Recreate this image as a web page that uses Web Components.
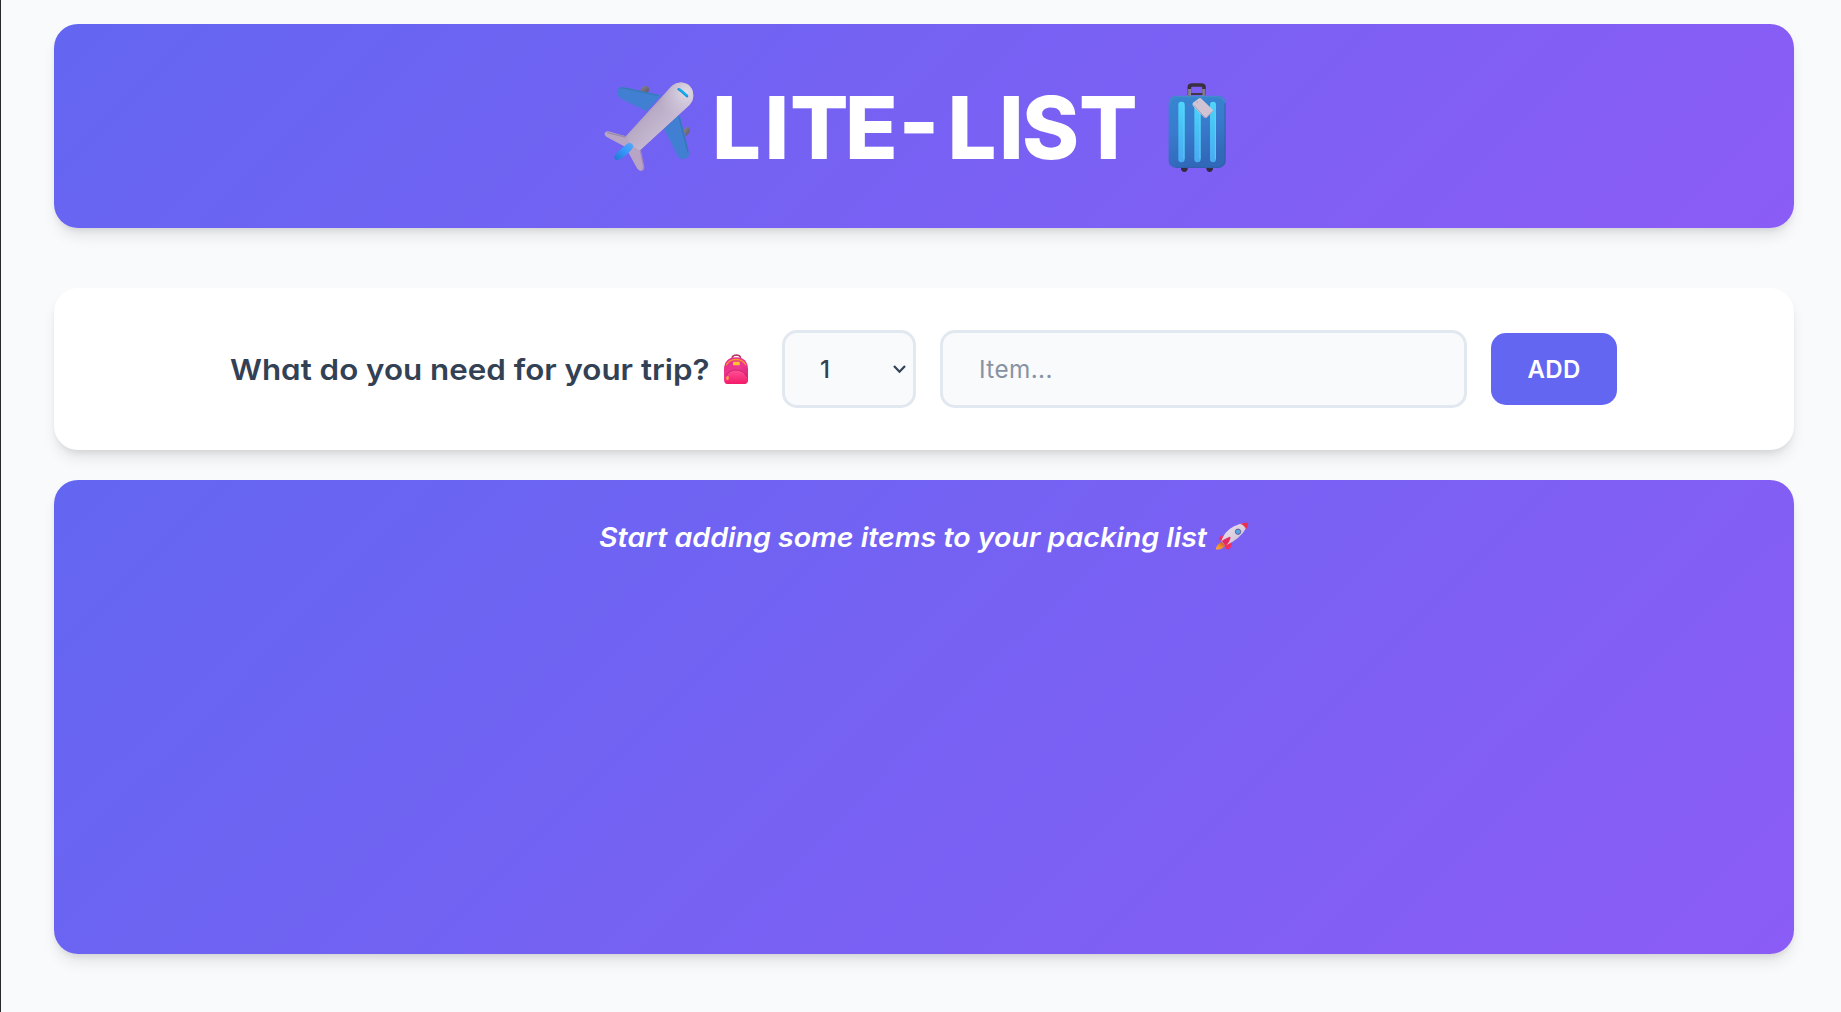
<!DOCTYPE html>
<html lang="en">
<head>
<meta charset="utf-8">
<title>Lite-List</title>
<style>
html,body{margin:0;height:100%;background:#f8fafc;overflow:hidden}
body{font-family:Inter,"Open Sans",sans-serif;color:#334155;font-feature-settings:"cv11";--card-shadow:0 10px 15px -3px rgba(0,0,0,.1),0 4px 6px -2px rgba(0,0,0,.08)}
</style>
</head>
<body>
<packing-app></packing-app>
<script>
const define=(name,html,setup)=>customElements.define(name,class extends HTMLElement{
  constructor(){super();this.attachShadow({mode:'open'}).innerHTML=html;}
  connectedCallback(){if(setup)setup(this);}
});

define('emoji-plane',`<style>:host{display:block;width:90px;height:90px}svg{display:block}</style>
<svg width="90" height="90" viewBox="42 36 270 270" aria-hidden="true">
<defs>
<linearGradient id="b" x1="135" y1="130" x2="205" y2="195" gradientUnits="userSpaceOnUse"><stop stop-color="#958a9f"/><stop offset=".35" stop-color="#b9abc5"/><stop offset="1" stop-color="#c6b9d2"/></linearGradient>
<radialGradient id="n" gradientUnits="userSpaceOnUse" cx="288" cy="66" r="85"><stop stop-color="#e0dce5"/><stop offset="1" stop-color="#cfc3da" stop-opacity="0"/></radialGradient>
<linearGradient id="t" x1="0" y1="1" x2="1" y2="0"><stop stop-color="#2475d0"/><stop offset=".6" stop-color="#3a9bff"/><stop offset="1" stop-color="#55a9f4"/></linearGradient>
<linearGradient id="g" x1="0" y1="0" x2="1" y2="1"><stop stop-color="#8b8794"/><stop offset="1" stop-color="#5c5763"/></linearGradient>
</defs>
<path d="M149 62 159 50Q166 44 174 50Q181 56 173 69Z" fill="url(#g)"/>
<path d="M279 181 288 173Q296 168 300 176Q303 184 288 199Z" fill="url(#g)"/>
<path d="M98 51 214 76 170 124 94 86Q80 79 82 65Q84 51 98 51Z" fill="#417fd3"/>
<path d="M90 57Q94 53 101 54L205 77" fill="none" stroke="#367bb6" stroke-width="4"/>
<path d="M269 133 297 247Q299 264 283 267Q269 268 263 257L222 176Z" fill="#417fd3"/>
<path d="M267 140 294 247" fill="none" stroke="#3676b7" stroke-width="4"/>
<path d="M246 47Q269 31 293 43Q313 57 309 85Q308 95 299 104L150 241 162 290Q163 302 153 303Q146 303 141 295L116 249 102 229 49 200Q40 193 46 187Q50 182 60 185L108 199Z" fill="#b8a5c6"/>
<path d="M246 47Q269 31 293 43Q313 57 309 85Q308 95 299 104L150 241Q122 230 108 199Z" fill="url(#b)"/>
<path d="M246 47Q269 31 293 43Q313 57 309 85Q308 95 299 104L150 241 108 199Z" fill="url(#n)"/>
<path d="M151 241 161 291Q161 299 154 301" fill="none" stroke="#a98ab8" stroke-width="4"/>
<path d="M52 188 107 201" fill="none" stroke="#9b8ba6" stroke-width="4"/>
<path d="M110 223Q118 216 125 221Q133 226 128 234Q122 245 98 263Q87 271 78 270Q70 266 74 258Q79 246 96 234Z" fill="url(#t)"/>
<path d="M266 58Q271 60 275 64L291 78" stroke="#198fdb" stroke-width="8" stroke-linecap="round" fill="none"/>
<path d="M268 57 291 76" stroke="#0bbcf2" stroke-width="4" stroke-linecap="round"/>
</svg>`);

define('emoji-luggage',`<style>:host{display:block;width:90px;height:90px}svg{display:block}</style>
<svg width="90" height="90" viewBox="36 36 270 270" aria-hidden="true">
<defs>
<linearGradient id="b" x1="0" y1="0" x2=".25" y2="1"><stop stop-color="#3687d2"/><stop offset=".5" stop-color="#397bcd"/><stop offset="1" stop-color="#3168b9"/></linearGradient>
<linearGradient id="s" x1="0" y1="0" x2="0" y2="1"><stop stop-color="#50d4fb"/><stop offset=".45" stop-color="#48c1f5"/><stop offset="1" stop-color="#4aaaf2"/></linearGradient>
<linearGradient id="m" x1="0" y1="0" x2="1" y2="0"><stop stop-color="#766e7e"/><stop offset=".5" stop-color="#c5bdca"/><stop offset="1" stop-color="#736b79"/></linearGradient>
</defs>
<path d="M123 289H143V296Q142 305 133 306Q124 305 123 296ZM199 289H219V296Q218 305 209 306Q200 305 199 296Z" fill="#342b3d"/>
<path d="M148 74V52Q148 45 156 45H184Q192 45 192 52V74" fill="none" stroke="#3b3040" stroke-width="11"/>
<path d="M143 57H153V78H143ZM187 57H197V78H187Z" fill="url(#m)"/>
<path d="M153 72H187" stroke="#423745" stroke-width="6"/>
<rect x="86" y="77" width="171" height="217" rx="22" fill="url(#b)"/>
<path d="M255 99V271Q253 292 231 292H110" fill="none" stroke="#315ea8" stroke-width="4" opacity=".6"/>
<path d="M89 104Q89 80 112 80H230Q251 81 254 98" fill="none" stroke="#468bca" stroke-width="4"/>
<g fill="url(#s)"><rect x="115" y="95" width="19" height="182" rx="9"/><rect x="163" y="95" width="19" height="182" rx="9"/><rect x="210" y="95" width="18" height="182" rx="9"/></g>
<g fill="none" stroke="#62dcfa" stroke-width="2"><path d="M132 105V267M180 120V267M226 128V267"/></g>
<path d="M177 85 182 84 217 118Q221 121 217 125L200 143Q196 146 192 142L159 108Q157 105 158 99Z" fill="#cfc3d4"/>
<path d="M159 104 195 142Q197 144 201 141L217 124" fill="none" stroke="#aaa0bd" stroke-width="3"/>
<circle cx="172" cy="97" r="3" fill="#beaec3"/>
</svg>`);

define('emoji-backpack',`<style>:host{display:block;width:28px;height:32px}svg{display:block}</style>
<svg width="28" height="32" viewBox="66 99 84 96" aria-hidden="true">
<defs><linearGradient id="b" x1="0" y1="0" x2="1" y2="1"><stop stop-color="#e82c83"/><stop offset=".5" stop-color="#ed3990"/><stop offset="1" stop-color="#d51f68"/></linearGradient>
<linearGradient id="p" x1=".5" y1="0" x2=".5" y2="1"><stop stop-color="#ff5097"/><stop offset="1" stop-color="#f31b69"/></linearGradient></defs>
<path d="M97 116V111Q99 106 109 105Q119 106 121 111V116" fill="none" stroke="#bb3a66" stroke-width="5"/>
<path d="M72 148Q73 113 108 112Q143 113 144 147V180Q144 192 132 192H84Q72 192 72 180Z" fill="url(#b)"/>
<path d="M79 136Q86 119 108 118Q130 119 138 136" fill="none" stroke="#f3a02d" stroke-width="3.5"/>
<path d="M76 190Q80 151 108 150Q138 151 143 181Q142 192 131 192H83Z" fill="url(#p)"/>
<path d="M78 169Q84 151 108 150Q132 151 139 170" fill="none" stroke="#c52268" stroke-width="2.5"/>
<rect x="99" y="125" width="20" height="11" rx="2" fill="#ffc334"/>
<path d="M81 169H86V178Q82 183 79 178V171Z" fill="#ffac38"/>
</svg>`);

define('emoji-rocket',`<style>:host{display:block;width:34px;height:29px}svg{display:block}</style>
<svg width="34" height="29" viewBox="885 39 102 87" aria-hidden="true">
<defs><linearGradient id="f" x1="1" y1="0" x2="0" y2="1"><stop stop-color="#b54b2b"/><stop offset=".5" stop-color="#f38b27"/><stop offset="1" stop-color="#ffae37"/></linearGradient>
<linearGradient id="b" x1="0" y1="0" x2="1" y2="1"><stop stop-color="#eee5f1"/><stop offset="1" stop-color="#c8b9d0"/></linearGradient></defs>
<path d="M903 100Q892 104 887 121Q903 124 915 112L912 101Z" fill="url(#f)"/>
<path d="M914 80Q899 78 896 92L905 95 918 91ZM936 94Q937 111 928 121L918 121 915 108Z" fill="#f02e61"/>
<path d="M904 97Q913 67 942 52Q962 42 977 43Q983 48 978 58Q962 89 916 110Z" fill="url(#b)"/>
<path d="M961 45Q975 39 984 42Q987 48 978 61Q974 49 961 45Z" fill="#ef2e4d"/>
<path d="M905 96Q914 89 929 83L932 86Q928 101 917 112Z" fill="#e52a61"/>
<circle cx="954" cy="68" r="8" fill="#52a8e8" stroke="#665e94" stroke-width="3"/>
</svg>`);

define('page-header',`<style>
:host{display:flex;height:204px;border-radius:24px;background:linear-gradient(135deg,#6366f1,#8b5cf6);box-shadow:var(--card-shadow);align-items:center;justify-content:center;padding:2px 2px 0 0;box-sizing:border-box;color:#fff}
svg{display:block;overflow:visible;margin:0 17px 0 23px}
text{font:800 86.6px Inter,sans-serif;font-feature-settings:"case"}
</style><emoji-plane></emoji-plane>
<svg width="418" height="90"><text fill="currentColor" y="77" x="-5 47.5 73 128 181.5 230.5 282 305 362">LITE-LIST</text></svg>
<emoji-luggage></emoji-luggage>`);

define('quantity-select',`<style>
:host{display:grid;width:134px;height:78px;align-items:center}
select,svg{grid-area:1/1}
select{appearance:none;box-sizing:border-box;width:134px;height:78px;border:3px solid #e2e8f0;border-radius:15px;background:#f8fafc;color:#334155;font:500 24px Inter,sans-serif;padding:0 34px 0 35px;outline:0}
svg{justify-self:end;margin-right:9px;pointer-events:none}
</style><select aria-label="Quantity"><option>1</option></select>
<svg width="15" height="12" viewBox="0 0 15 12"><path d="M2 3 7.5 8.7 13 3" fill="none" stroke="#334155" stroke-width="2.2"/></svg>`);

define('item-input',`<style>
:host{display:block}
input{display:block;box-sizing:border-box;width:527px;height:78px;border:3px solid #e2e8f0;border-radius:15px;background:#f8fafc;font:400 24.3px Inter,sans-serif;color:#334155;padding:0 34px 0 36px;outline:0;letter-spacing:.4px}
input::placeholder{color:#8793a3;opacity:1}
</style><input placeholder="Item...">`);

define('add-button',`<style>
:host{display:block}
button{display:block;width:126px;height:72px;border:0;border-radius:15px;background:#6366f1;color:#fff;font:600 24px Inter,sans-serif;letter-spacing:.3px;padding:0}
</style><button><slot></slot></button>`);

define('item-form',`<style>
:host{display:flex;box-sizing:border-box;height:162px;margin-top:60px;border-radius:24px;background:#fff;box-shadow:var(--card-shadow);align-items:center;justify-content:center;gap:24px}
.label{display:flex;align-items:center;gap:14px;margin-right:8px}
svg{display:block;overflow:visible}
text{font:600 29px Inter,sans-serif;font-feature-settings:"cv11"}
</style><div class="label"><svg width="477" height="40"><text x="-1" y="31" fill="#334155" textLength="479.5" lengthAdjust="spacingAndGlyphs">What do you need for your trip?</text></svg><emoji-backpack></emoji-backpack></div>
<quantity-select></quantity-select><item-input></item-input><add-button>ADD</add-button>`);

define('packing-list',`<style>
:host{display:flex;box-sizing:border-box;height:474px;margin-top:30px;padding-top:42px;border-radius:24px;background:linear-gradient(135deg,#6366f1,#8b5cf6);box-shadow:var(--card-shadow);align-items:flex-start;justify-content:center;gap:9px;color:#fff}
svg{display:block;overflow:visible}
text{font:italic 600 26.8px Inter,sans-serif;font-feature-settings:"cv11"}
</style><svg width="606" height="30"><text x="-1" y="25" fill="currentColor" textLength="608" lengthAdjust="spacingAndGlyphs">Start adding some items to your packing list</text></svg><emoji-rocket></emoji-rocket>`);

define('packing-app',`<style>
:host{display:block;box-sizing:border-box;height:1012px;border-left:1px solid #29292d;padding:24px 47px 0 53px;background:#f8fafc}
</style><page-header></page-header><item-form></item-form><packing-list></packing-list>`);
</script>
</body>
</html>
